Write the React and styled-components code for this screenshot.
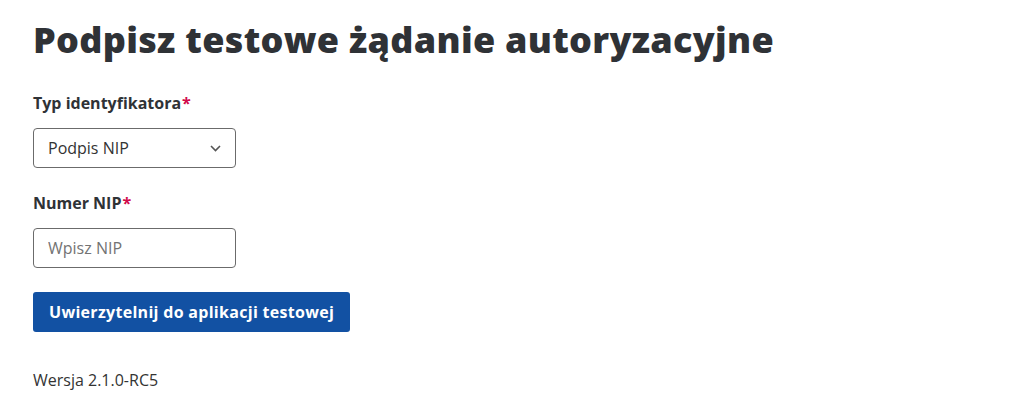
import React, { useState } from 'react';
import styled, { createGlobalStyle } from 'styled-components';

const GlobalStyle = createGlobalStyle`
  html, body {
    margin: 0;
    padding: 0;
    background: #ffffff;
  }
  body {
    font-family: 'Open Sans', 'Noto Sans', 'Liberation Sans', sans-serif;
    color: #333333;
  }
`;

const Page = styled.main`
  padding: 16px 33px 0;
  display: flex;
  flex-direction: column;
  align-items: flex-start;
`;

const Title = styled.h1`
  margin: 0 0 28px;
  font-family: 'Open Sans', 'Noto Sans', sans-serif;
  font-weight: 800;
  font-size: 36px;
  line-height: 48px;
  letter-spacing: 0.3px;
  color: #2f3236;
`;

const Field = styled.div`
  display: flex;
  flex-direction: column;
  gap: 14px;
  margin-bottom: 24px;
`;

const Label = styled.label`
  font-weight: 700;
  font-size: 16px;
  line-height: 22px;
  color: #2f3236;
`;

const Required = styled.span`
  color: #d10a4b;
  margin-left: 1px;
`;

const SelectBox = styled.div`
  position: relative;
  width: 203px;
  height: 40px;
`;

const Select = styled.select`
  appearance: none;
  width: 100%;
  height: 100%;
  box-sizing: border-box;
  border: 1px solid #6b6b6b;
  border-radius: 4px;
  background: #fff;
  padding: 0 36px 0 14px;
  font-family: inherit;
  font-size: 16px;
  color: #333;
  outline: none;
`;

const Chevron = styled.svg`
  position: absolute;
  right: 15px;
  top: 17px;
  pointer-events: none;
`;

const Input = styled.input`
  width: 203px;
  height: 40px;
  box-sizing: border-box;
  border: 1px solid #6b6b6b;
  border-radius: 4px;
  padding: 0 14px;
  font-family: inherit;
  font-size: 16px;
  color: #333;
  outline: none;

  &::placeholder {
    color: #737373;
  }
`;

const Button = styled.button`
  height: 40px;
  padding: 0 16px;
  border: none;
  border-radius: 3px;
  background: #1251a3;
  color: #ffffff;
  font-family: inherit;
  font-weight: 700;
  font-size: 16px;
  letter-spacing: 0.3px;
  cursor: pointer;
`;

const Version = styled.p`
  margin: 37px 0 0;
  font-size: 16px;
  line-height: 22px;
  color: #333;
`;

const App = () => {
  const [type, setType] = useState('nip');
  const [nip, setNip] = useState('');

  return (
    <>
      <GlobalStyle />
      <Page>
        <Title>Podpisz testowe żądanie autoryzacyjne</Title>
        <Field>
          <Label htmlFor="type">
            Typ identyfikatora<Required>*</Required>
          </Label>
          <SelectBox>
            <Select id="type" value={type} onChange={(e) => setType(e.target.value)}>
              <option value="nip">Podpis NIP</option>
              <option value="pesel">Podpis PESEL</option>
            </Select>
            <Chevron width="11" height="7" viewBox="0 0 11 7">
              <path d="M1 1l4.5 4.5L10 1" fill="none" stroke="#555" strokeWidth="1.6" />
            </Chevron>
          </SelectBox>
        </Field>
        <Field>
          <Label htmlFor="nip">
            Numer NIP<Required>*</Required>
          </Label>
          <Input
            id="nip"
            placeholder="Wpisz NIP"
            value={nip}
            onChange={(e) => setNip(e.target.value)}
          />
        </Field>
        <Button type="button">Uwierzytelnij do aplikacji testowej</Button>
        <Version>Wersja 2.1.0-RC5</Version>
      </Page>
    </>
  );
};

export default App;
